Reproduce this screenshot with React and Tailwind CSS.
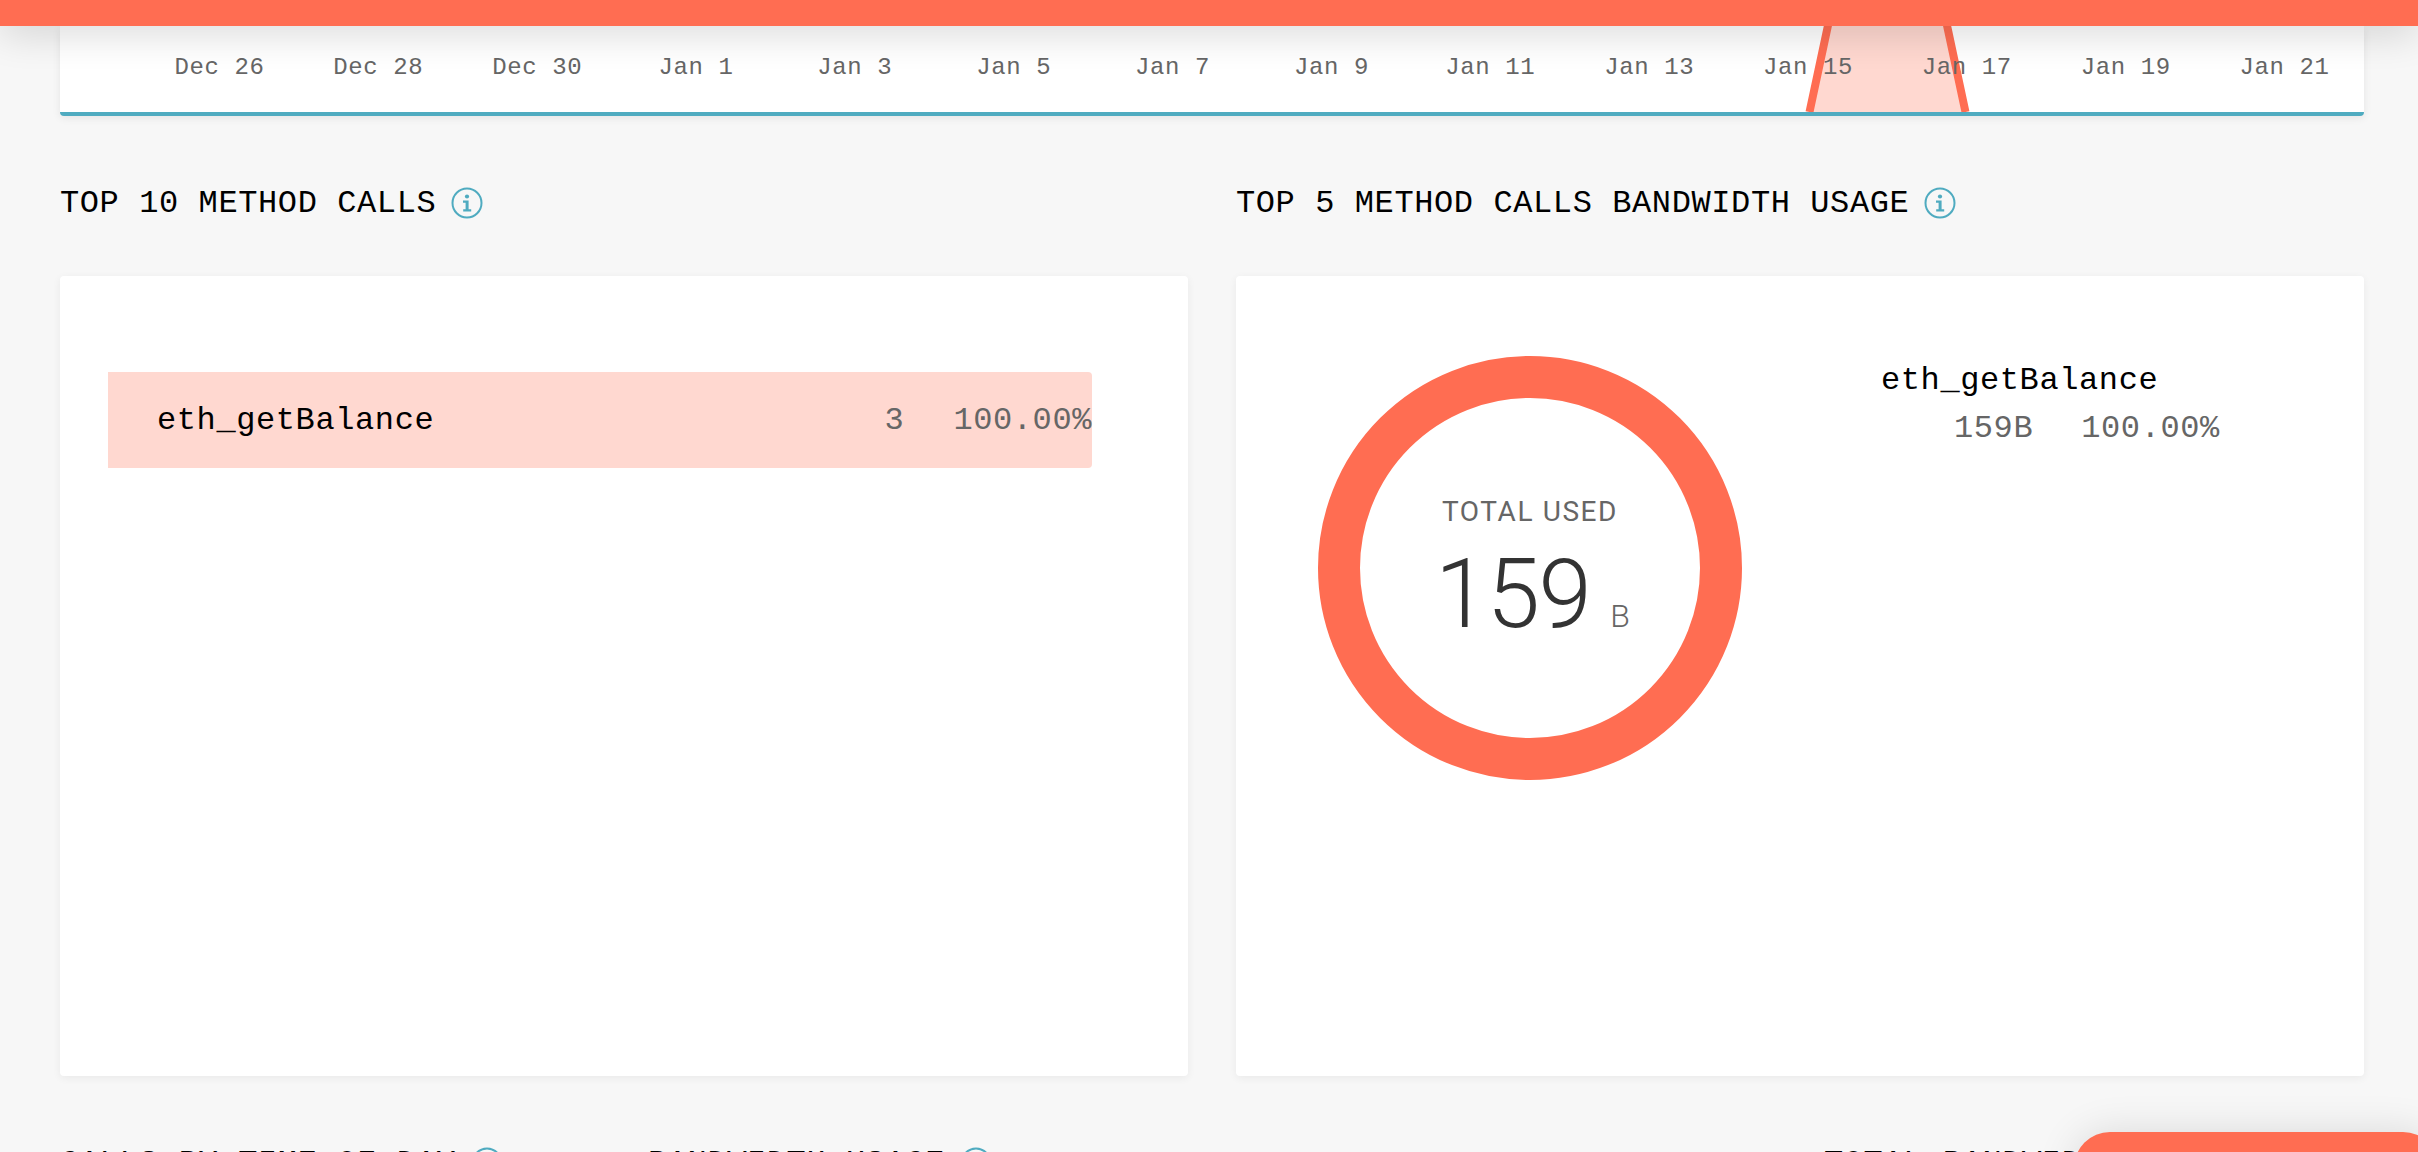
const mono = "font-['Liberation_Mono',monospace]";

const dates = ['Dec 26', 'Dec 28', 'Dec 30', 'Jan 1', 'Jan 3', 'Jan 5', 'Jan 7', 'Jan 9', 'Jan 11', 'Jan 13', 'Jan 15', 'Jan 17', 'Jan 19', 'Jan 21'];

const InfoIcon = () => (
  <svg width="32" height="32" viewBox="0 0 32 32" fill="none" className="shrink-0">
    <circle cx="16" cy="16" r="14.5" stroke="#4fabc0" strokeWidth="2" />
    <circle cx="16" cy="9.5" r="2.1" fill="#4fabc0" />
    <path d="M12 13.6h5.6v8.6h2.6v2.2h-8v-2.2h2.4v-6.4h-2.6z" fill="#4fabc0" />
  </svg>
);

const Heading = ({ children }) => (
  <div className="flex items-center gap-[15px]">
    <h2 className={`${mono} pt-[2px] text-[32px] leading-[40px] tracking-[0.6px] text-black whitespace-nowrap`}>{children}</h2>
    <InfoIcon />
  </div>
);

const ChartStrip = () => (
  <div className="relative ml-[60px] mr-[54px] h-[90px] rounded-b border-b-4 border-[#4fabc0] bg-white shadow-[0_2px_8px_rgba(0,0,0,0.08)]">
    {/* selected range marker */}
    <svg className="absolute left-0 top-0" width="2304" height="86" fill="none">
      <path d="M1749.5 86 L1770 -10 L1885 -10 L1905.5 86 Z" fill="#ffd8d0" />
      <path d="M1749.5 86 L1770 -10 M1885 -10 L1905.5 86" stroke="#ff6d52" strokeWidth="8" />
    </svg>
    <div className={`${mono} relative grid grid-cols-14 pl-[80px] pt-[25px] text-[24px] leading-[34px] tracking-[0.6px] text-[#666]`}>
      {dates.map((d) => (
        <span key={d} className="text-center whitespace-pre">{d}</span>
      ))}
    </div>
  </div>
);

const MethodCalls = () => (
  <div className="h-[800px] rounded bg-white px-[48px] pt-[96px] shadow-[0_2px_8px_rgba(0,0,0,0.06)]">
    <div className={`${mono} flex h-[96px] w-[984px] items-center rounded-r bg-[#ffd8d0] pl-[49px] pt-[2px] text-[32px] tracking-[0.6px]`}>
      <span className="text-black">eth_getBalance</span>
      <span className="ml-auto text-[#666]">3</span>
      <span className="ml-[49px] text-[#666]">100.00%</span>
    </div>
  </div>
);

const Donut = () => (
  <div className="relative h-[424px] w-[424px]">
    <svg width="424" height="424" viewBox="0 0 424 424" fill="none">
      <circle cx="212" cy="212" r="191" stroke="#ff6d52" strokeWidth="42" />
    </svg>
    <div className="absolute inset-0 flex flex-col items-center font-['Roboto',sans-serif]">
      <span className="mt-[138px] text-[28px] leading-[36px] tracking-[1.6px] text-[#666]">TOTAL USED</span>
      <div className="mt-[14px] ml-[5px] flex items-baseline">
        <span className="text-[96px] leading-[100px] font-light tracking-[-1.5px] text-[#333]">159</span>
        <span className="ml-[20px] text-[32px] font-light text-[#666]">B</span>
      </div>
    </div>
  </div>
);

const BandwidthUsage = () => (
  <div className="flex h-[800px] rounded bg-white pl-[82px] pt-[80px] shadow-[0_2px_8px_rgba(0,0,0,0.06)]">
    <Donut />
    <div className={`${mono} ml-[139px] pt-[1px] text-[32px] leading-[48px] tracking-[0.6px]`}>
      <div className="text-black">eth_getBalance</div>
      <div className="flex gap-[48px] pl-[73px] text-[#666]">
        <span>159B</span>
        <span>100.00%</span>
      </div>
    </div>
  </div>
);

export default function App() {
  return (
    <div className="relative h-[1152px] overflow-hidden bg-[#f7f7f7]">
      <div className="relative z-10 h-[26px] bg-[#ff6d52] shadow-[0_4px_40px_rgba(0,0,0,0.2)]" />
      <ChartStrip />

      <main className="pl-[60px] pr-[54px]">
        <div className="grid grid-cols-2 gap-[48px]">
          <div>
            <div className="flex h-[160px] items-center pt-[14px]"><Heading>TOP 10 METHOD CALLS</Heading></div>
            <MethodCalls />
          </div>
          <div>
            <div className="flex h-[160px] items-center pt-[14px]"><Heading>TOP 5 METHOD CALLS BANDWIDTH USAGE</Heading></div>
            <BandwidthUsage />
          </div>
        </div>

        <div className="mt-[66px] grid grid-cols-4 gap-[48px]">
          <Heading>CALLS BY TIME OF DAY</Heading>
          <Heading>BANDWIDTH USAGE</Heading>
          <div />
          <Heading>TOTAL BANDWIDTH</Heading>
        </div>
      </main>

      <div className="absolute left-[2074px] top-[1132px] z-20 h-[72px] w-[365px] rounded-[36px] bg-[#ff6d52] shadow-[0_0_40px_rgba(0,0,0,0.12)]" />
    </div>
  );
}
